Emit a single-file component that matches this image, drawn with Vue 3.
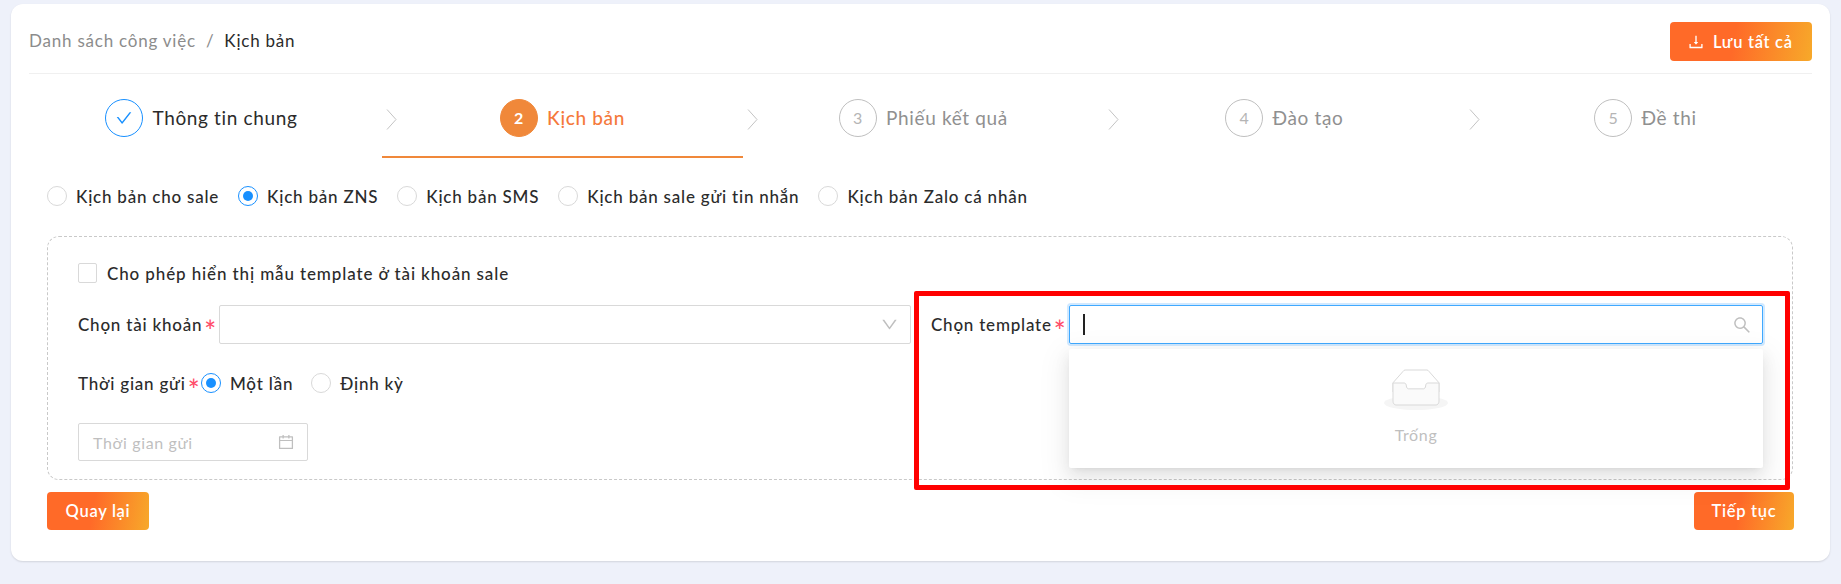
<template>
  <div class="page">
    <div class="card">
      <div class="header">
        <div class="crumbs">
          <span class="crumb-link">Danh sách công việc</span>
          <span class="crumb-sep">/</span>
          <span class="crumb-now">Kịch bản</span>
        </div>
        <button class="btn btn-save">
          <svg class="save-icon" viewBox="0 0 1024 1024" fill="currentColor">
            <path d="M505.7 661a8 8 0 0012.6 0l112-141.7c4.1-5.2.4-12.9-6.3-12.9h-74.1V168c0-4.4-3.6-8-8-8h-60c-4.4 0-8 3.6-8 8v338.3H400c-6.7 0-10.4 7.7-6.3 12.9l112 141.8zM878 626h-60c-4.4 0-8 3.6-8 8v154H214V634c0-4.4-3.6-8-8-8h-60c-4.4 0-8 3.6-8 8v198c0 17.7 14.3 32 32 32h684c17.7 0 32-14.3 32-32V634c0-4.4-3.6-8-8-8z" />
          </svg>
          Lưu tất cả
        </button>
      </div>

      <div class="steps">
        <div
          v-for="(step, i) in steps"
          :key="step"
          class="step"
          :class="{ done: i === 0, active: i === 1 }"
        >
          <svg v-if="i > 0" class="chevron" viewBox="0 0 11 21" fill="none">
            <path d="M1 .5 10 10.5 1 20.5" stroke="#c4c4c4" />
          </svg>
          <span class="step-num">
            <svg v-if="i === 0" class="check" viewBox="0 0 1024 1024" fill="currentColor">
              <path d="M912 190h-69.9c-9.8 0-19.1 4.5-25.1 12.2L404.7 724.5 207 474a32 32 0 00-25.1-12.2H112c-6.7 0-10.4 7.7-6.3 12.9l273.9 347c12.8 16.2 37.4 16.2 50.3 0l488.4-618.9c4.1-5.1.4-12.8-6.3-12.8z" />
            </svg>
            <template v-else>{{ i + 1 }}</template>
          </span>
          <span class="step-title">{{ step }}</span>
        </div>
      </div>

      <div class="script-types">
        <label v-for="(type, i) in scriptTypes" :key="type" class="radio-item">
          <span class="radio" :class="{ checked: i === 1 }"></span>
          {{ type }}
        </label>
      </div>

      <div class="box">
        <label class="check-row">
          <span class="checkbox"></span>
          Cho phép hiển thị mẫu template ở tài khoản sale
        </label>

        <div class="fields">
          <div class="left">
            <div class="field">
              <span class="label account-label">Chọn tài khoản<i class="req">*</i></span>
              <div class="input">
                <svg class="down" viewBox="0 0 1024 1024" fill="currentColor">
                  <path d="M884 256h-75c-5.1 0-9.9 2.5-12.9 6.6L512 654.2 227.9 262.6c-3-4.1-7.8-6.6-12.9-6.6h-75c-6.5 0-10.3 7.4-6.5 12.7l352.6 486.1c12.8 17.6 39 17.6 51.7 0l352.6-486.1c3.9-5.3.1-12.7-6.4-12.7z" />
                </svg>
              </div>
            </div>

            <div class="time-row">
              <span class="label time-label">Thời gian gửi<i class="req">*</i></span>
              <label class="radio-item">
                <span class="radio checked"></span>
                Một lần
              </label>
              <label class="radio-item">
                <span class="radio"></span>
                Định kỳ
              </label>
            </div>

            <div class="date-input">
              <span>Thời gian gửi</span>
              <svg class="calendar" viewBox="0 0 1024 1024" fill="currentColor">
                <path d="M880 184H712v-64c0-4.4-3.6-8-8-8h-56c-4.4 0-8 3.6-8 8v64H384v-64c0-4.4-3.6-8-8-8h-56c-4.4 0-8 3.6-8 8v64H144c-17.7 0-32 14.3-32 32v664c0 17.7 14.3 32 32 32h736c17.7 0 32-14.3 32-32V216c0-17.7-14.3-32-32-32zm-40 656H184V460h656v380zM184 392V256h128v48c0 4.4 3.6 8 8 8h56c4.4 0 8-3.6 8-8v-48h256v48c0 4.4 3.6 8 8 8h56c4.4 0 8-3.6 8-8v-48h128v136H184z" />
              </svg>
            </div>
          </div>

          <div class="field right">
            <span class="label template-label">Chọn template<i class="req">*</i></span>
            <div class="input focused">
              <span class="caret"></span>
              <svg class="search" viewBox="0 0 1024 1024" fill="currentColor">
                <path d="M909.6 854.5L649.9 594.8C690.2 542.7 712 479 712 412c0-80.2-31.3-155.4-87.9-212.1-56.6-56.7-132-87.9-212.1-87.9s-155.5 31.3-212.1 87.9C143.2 256.5 112 331.8 112 412c0 80.1 31.3 155.5 87.9 212.1C256.5 680.8 331.8 712 412 712c67 0 130.6-21.8 182.7-62l259.7 259.6a8.2 8.2 0 0011.6 0l43.6-43.5a8.2 8.2 0 000-11.6zM570.4 570.4C528 612.7 471.8 636 412 636s-116-23.3-158.4-65.6C211.3 528 188 471.8 188 412s23.3-116.1 65.6-158.4C296 211.3 352.2 188 412 188s116.1 23.2 158.4 65.6S636 352.2 636 412s-23.3 116.1-65.6 158.4z" />
              </svg>
              <div class="dropdown">
                <svg class="empty-icon" viewBox="0 0 64 41">
                  <g transform="translate(0 1)" fill="none" fill-rule="evenodd">
                    <ellipse fill="#f5f5f5" cx="32" cy="33" rx="32" ry="7" />
                    <g fill-rule="nonzero" stroke="#d9d9d9">
                      <path d="M55 12.76L44.854 1.258C44.367.474 43.656 0 42.907 0H21.093c-.749 0-1.46.474-1.947 1.257L9 12.761V22h46v-9.24z" />
                      <path d="M41.613 15.931c0-1.605.994-2.93 2.227-2.931H55v18.137C55 33.26 53.68 35 52.05 35h-40.1C10.32 35 9 33.259 9 31.137V13h11.16c1.233 0 2.227 1.323 2.227 2.928v.022c0 1.605 1.005 2.901 2.237 2.901h14.752c1.232 0 2.237-1.308 2.237-2.913v-.007z" fill="#fafafa" />
                    </g>
                  </g>
                </svg>
                <span class="empty-text">Trống</span>
              </div>
            </div>
          </div>
        </div>
      </div>

      <div class="actions">
        <button class="btn btn-back">Quay lại</button>
        <button class="btn btn-next">Tiếp tục</button>
      </div>
    </div>
    <div class="highlight"></div>
  </div>
</template>

<script setup>
const steps = ['Thông tin chung', 'Kịch bản', 'Phiếu kết quả', 'Đào tạo', 'Đề thi']
const scriptTypes = [
  'Kịch bản cho sale',
  'Kịch bản ZNS',
  'Kịch bản SMS',
  'Kịch bản sale gửi tin nhắn',
  'Kịch bản Zalo cá nhân'
]
</script>

<style>
html,
body {
  margin: 0;
  background: #eef1fa;
}
</style>

<style scoped>
.page {
  position: relative;
  box-sizing: border-box;
  width: 1841px;
  height: 584px;
  padding: 4px 11px 0;
  background: #eef1fa;
  overflow: hidden;
  font-family: "Lato", "Noto Sans", sans-serif;
  font-size: 17px;
  letter-spacing: 0.78px;
  color: #2b2b2b;
}
.card {
  box-sizing: border-box;
  width: 1819px;
  height: 557px;
  padding: 18px 18px 0;
  background: #fff;
  border-radius: 12px;
  box-shadow: 0 1px 2px rgba(0, 0, 0, 0.12);
}
.header {
  display: flex;
  justify-content: space-between;
  align-items: center;
  height: 39px;
  padding-bottom: 12px;
  border-bottom: 1px solid #f0f0f0;
}
.crumbs {
  padding-bottom: 2px;
}
.crumb-link {
  color: #8c8c8c;
}
.crumb-sep {
  margin: 0 10px;
  color: #8c8c8c;
}
.btn {
  height: 38px;
  padding: 0;
  border: 0;
  border-radius: 4px;
  font: inherit;
  font-size: 16.5px;
  font-weight: 600;
  letter-spacing: 0.7px;
  color: #fff;
  background: linear-gradient(100deg, #ff6a28 45%, #f7a92a 100%);
}
.btn-back {
  width: 102px;
}
.btn-next {
  width: 100px;
}
.btn-save {
  display: flex;
  align-items: center;
  gap: 8px;
  width: 142px;
  height: 39px;
  padding: 0 0 0 17px;
}
.save-icon {
  width: 18px;
  height: 18px;
}
.steps {
  display: grid;
  grid-template-columns: repeat(5, 361px);
  margin: 0 0 0 -8px;
}
.step {
  position: relative;
  display: flex;
  justify-content: center;
  align-items: center;
  gap: 9px;
  height: 84px;
  padding-top: 5px;
  font-size: 19px;
  letter-spacing: 0.65px;
  color: #909090;
  box-sizing: border-box;
  border-bottom: 2px solid transparent;
}
.step.active {
  border-bottom-color: #f0883a;
  color: #f5793b;
  font-weight: 500;
}
.step.done {
  color: #2b2b2b;
}
.chevron {
  position: absolute;
  left: 4px;
  top: 35px;
  width: 11px;
  height: 21px;
}
.step-num {
  display: flex;
  justify-content: center;
  align-items: center;
  box-sizing: border-box;
  width: 38px;
  height: 38px;
  border: 1px solid #bfbfbf;
  border-radius: 50%;
  font-size: 16px;
  color: #b5b5b5;
}
.done .step-num {
  border-color: #1890ff;
  color: #1890ff;
}
.active .step-num {
  border-color: #f0883a;
  background: #f0883a;
  color: #fff;
  font-weight: 700;
}
.check {
  width: 18px;
  height: 18px;
}
.script-types {
  display: flex;
  gap: 19px;
  align-items: center;
  height: 22px;
  margin: 27px 0 0 18px;
}
.radio-item {
  display: flex;
  align-items: center;
  gap: 9px;
  white-space: nowrap;
  font-weight: 500;
}
.radio {
  position: relative;
  box-sizing: border-box;
  width: 20px;
  height: 20px;
  border: 1px solid #d9d9d9;
  border-radius: 50%;
}
.radio.checked {
  border-color: #1890ff;
}
.radio.checked::after {
  content: "";
  position: absolute;
  inset: 4px;
  border-radius: 50%;
  background: #1890ff;
}
.box {
  box-sizing: border-box;
  width: 1746px;
  height: 244px;
  margin: 29px 0 0 18px;
  padding: 26px 30px 0;
  border: 1px dashed #c9c9c9;
  border-radius: 12px;
}
.check-row {
  display: flex;
  align-items: center;
  gap: 10px;
  height: 20px;
  font-weight: 500;
  letter-spacing: 0.88px;
}
.checkbox {
  box-sizing: border-box;
  width: 19px;
  height: 20px;
  border: 1px solid #d9d9d9;
  border-radius: 2px;
}
.fields {
  display: grid;
  grid-template-columns: 833px 832px;
  column-gap: 20px;
  margin-top: 22px;
}
.field {
  display: flex;
  align-items: center;
  height: 39px;
}
.label {
  flex: none;
  white-space: nowrap;
  font-weight: 500;
}
.account-label {
  width: 141px;
}
.template-label {
  width: 138px;
}
.time-label {
  width: 123px;
}
.req {
  display: inline-block;
  margin-left: 2px;
  font-style: normal;
  font-size: 28px;
  line-height: 0;
  letter-spacing: 0;
  vertical-align: -10px;
  color: #ff4d6a;
}
.input {
  position: relative;
  flex: 1;
  box-sizing: border-box;
  height: 39px;
  border: 1px solid #d9d9d9;
  border-radius: 2px;
}
.input.focused {
  border-color: #40a9ff;
  box-shadow: 0 0 0 2px rgba(24, 144, 255, 0.2);
}
.down {
  position: absolute;
  right: 11px;
  top: 9px;
  width: 19px;
  height: 19px;
  color: #bfbfbf;
}
.caret {
  position: absolute;
  left: 13px;
  top: 8px;
  width: 2px;
  height: 21px;
  background: #222;
}
.search {
  position: absolute;
  right: 10px;
  top: 9px;
  width: 20px;
  height: 20px;
  color: #bfbfbf;
}
.dropdown {
  position: absolute;
  left: -1px;
  right: -1px;
  top: 43px;
  height: 119px;
  display: flex;
  flex-direction: column;
  align-items: center;
  background: #fff;
  border-radius: 2px;
  box-shadow: 0 3px 6px -4px rgba(0, 0, 0, 0.12), 0 6px 16px rgba(0, 0, 0, 0.08), 0 9px 28px 8px rgba(0, 0, 0, 0.05);
}
.empty-icon {
  width: 64px;
  height: 41px;
  margin-top: 20px;
}
.empty-text {
  margin-top: 15px;
  font-size: 16px;
  letter-spacing: 0.65px;
  color: #bfbfbf;
}
.time-row {
  display: flex;
  align-items: center;
  height: 24px;
  margin-top: 27px;
}
.time-row .radio-item + .radio-item {
  margin-left: 18px;
}
.date-input {
  display: flex;
  justify-content: space-between;
  align-items: center;
  box-sizing: border-box;
  width: 230px;
  height: 38px;
  margin-top: 28px;
  padding: 0 12px 0 14px;
  border: 1px solid #d9d9d9;
  border-radius: 2px;
  font-size: 16px;
  letter-spacing: 0.65px;
  color: #bfbfbf;
}
.calendar {
  width: 18px;
  height: 18px;
}
.actions {
  display: flex;
  justify-content: space-between;
  width: 1747px;
  margin: 12px 0 0 18px;
}
.highlight {
  position: absolute;
  left: 914px;
  top: 291px;
  box-sizing: border-box;
  width: 876px;
  height: 199px;
  border: 5px solid #f00;
  border-radius: 2px;
}
</style>
